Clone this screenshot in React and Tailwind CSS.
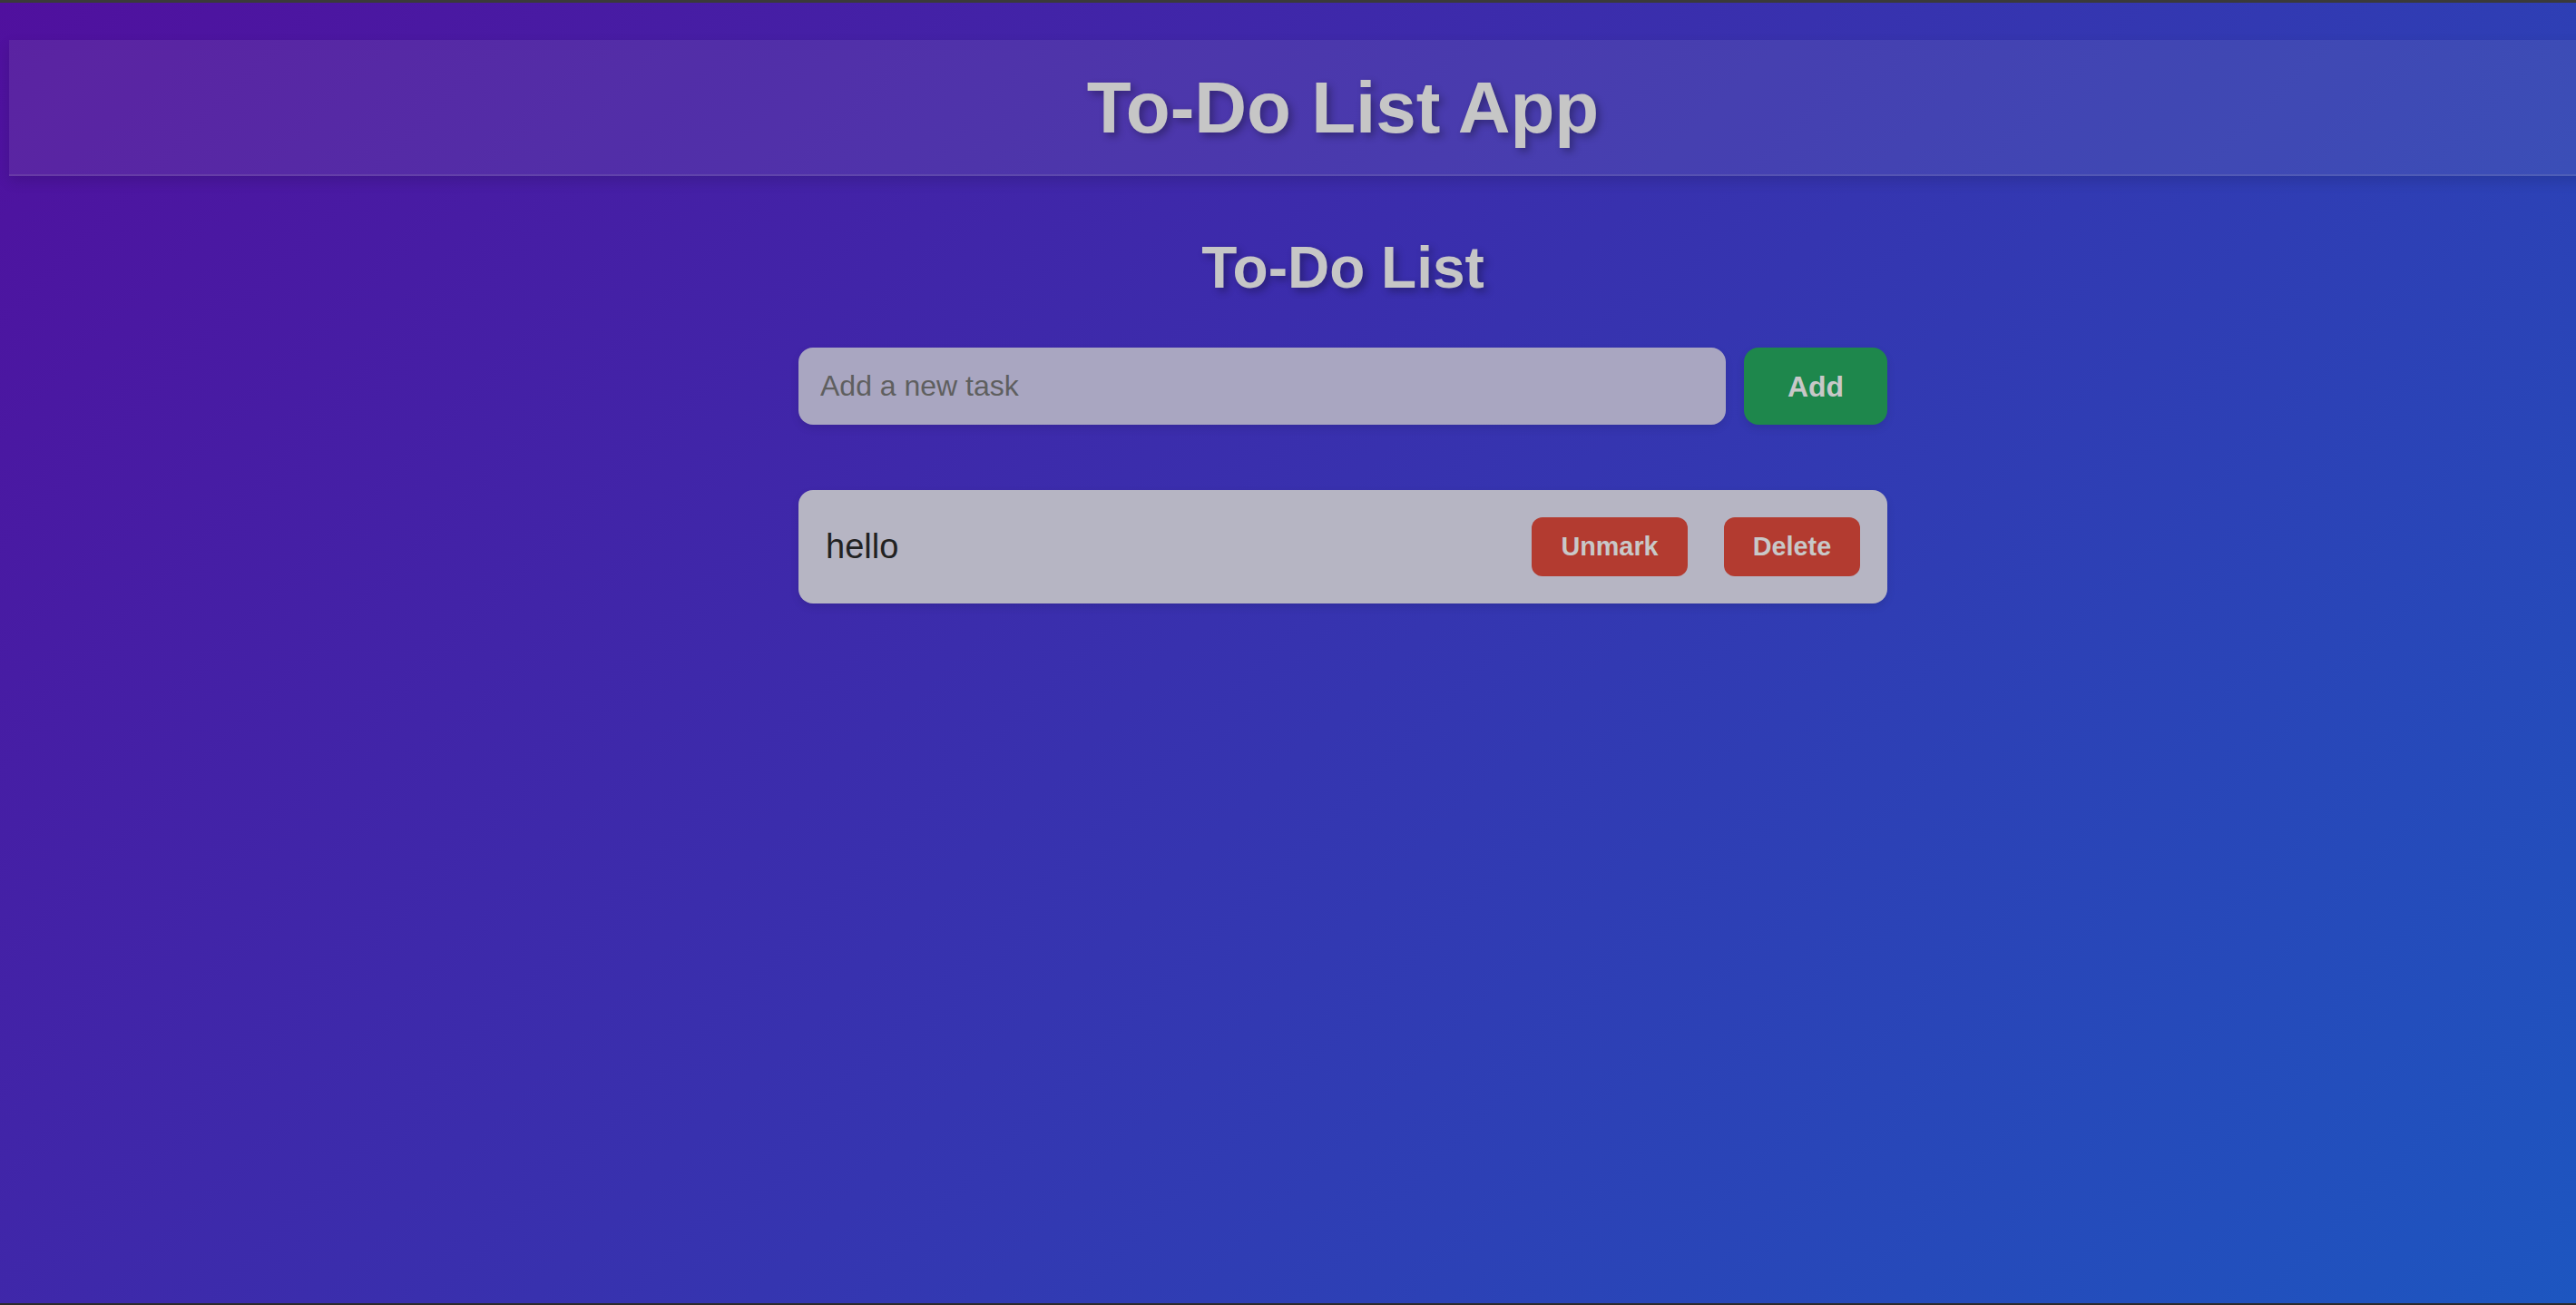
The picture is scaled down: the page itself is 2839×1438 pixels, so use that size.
import React from "react";

export default function App() {
  const font = { fontFamily: '"Liberation Sans", Arial, sans-serif' };
  return (
    <div className="h-screen w-full overflow-hidden flex flex-col" style={font}>
      <div className="h-[3px] bg-[#3a3a3a] shrink-0" />
      <div className="flex-1 overflow-hidden bg-[linear-gradient(135deg,#50109e,#1d56c0)]">
        <div className="w-[2960px]">
          <header className="mx-[10px] mt-[41px] pt-[29px] pb-[27px] bg-[rgba(192,192,192,0.1)] border-b-2 border-[rgba(191,191,191,0.15)] shadow-[0_6px_14px_rgba(0,0,0,0.12)]">
            <h1 className="text-center text-[80px] leading-[92px] font-bold text-[#c6c6c6] [text-shadow:4px_4px_8px_rgba(0,0,0,0.3)]">
              To-Do List App
            </h1>
          </header>
          <main className="w-[1200px] mx-auto">
            <h2 className="mt-[64px] text-center text-[64px] leading-[74px] font-bold text-[#c6c6c6] [text-shadow:4px_4px_8px_rgba(0,0,0,0.3)]">
              To-Do List
            </h2>
            <div className="mt-[51px] flex gap-[20px]">
              <input
                type="text"
                placeholder="Add a new task"
                className="flex-1 h-[85px] px-[24px] rounded-[16px] bg-[#a9a6c1] text-[32px] text-[#222] placeholder:text-[#5f5f5f] outline-none shadow-[0_4px_10px_rgba(0,0,0,0.1)]"
                style={font}
              />
              <button
                className="w-[158px] h-[85px] rounded-[16px] bg-[#1e874c] text-[32px] font-bold text-[#c8c8c8] shadow-[0_4px_10px_rgba(0,0,0,0.1)]"
                style={font}
              >
                Add
              </button>
            </div>
            <ul className="mt-[72px]">
              <li className="h-[125px] px-[30px] rounded-[16px] bg-[#b6b5c3] flex items-center justify-between shadow-[0_4px_10px_rgba(0,0,0,0.1)]">
                <span className="text-[38px] text-[#222]">hello</span>
                <div className="flex gap-[40px]">
                  <button
                    className="w-[172px] h-[65px] rounded-[12px] bg-[#b33b30] text-[28.8px] font-bold text-[#c8c8c8]"
                    style={font}
                  >
                    Unmark
                  </button>
                  <button
                    className="w-[150px] h-[65px] rounded-[12px] bg-[#b33b30] text-[28.8px] font-bold text-[#c8c8c8]"
                    style={font}
                  >
                    Delete
                  </button>
                </div>
              </li>
            </ul>
          </main>
        </div>
      </div>
      <div className="h-[2px] bg-[#2b2b2b] shrink-0" />
    </div>
  );
}
